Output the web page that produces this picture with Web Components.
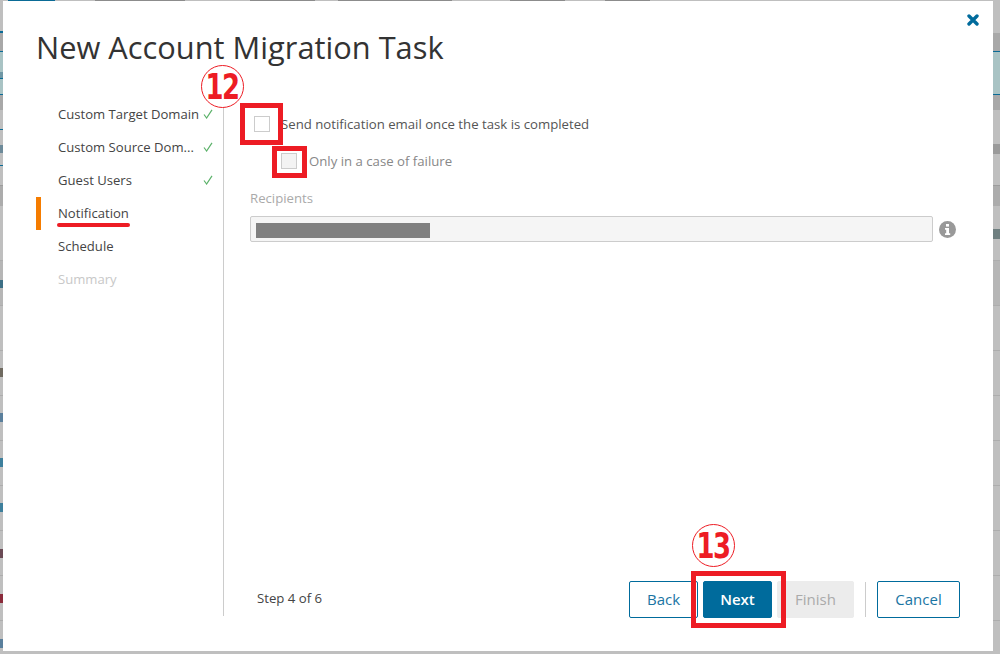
<!DOCTYPE html>
<html>
<head>
<meta charset="utf-8">
<title>New Account Migration Task</title>
<style>
    html, body { margin: 0; height: 100%; }
    body { font-family: "Open Sans", "Liberation Sans", sans-serif; overflow: hidden; }
</style>
</head>
<body>
<migration-page>
    <migration-modal heading="New Account Migration Task">
        <wizard-nav slot="nav"></wizard-nav>
        <notification-form></notification-form>
        <wizard-footer slot="footer"></wizard-footer>
    </migration-modal>
</migration-page>

<script>
class migrationPage extends HTMLElement {
    connectedCallback() {
        let shadowRoot = this.attachShadow({ mode: 'open' });

        // bits of the page behind the dialog: [x, y, w, h, colour]
        let bits = [
            [8, 0, 47, 1, '#0a6b96'], [95, 0, 90, 1, '#8c8c8c'], [250, 0, 65, 1, '#8c8c8c'],
            [338, 0, 114, 1, '#8c8c8c'], [510, 0, 55, 1, '#8c8c8c'], [605, 0, 45, 1, '#8c8c8c'],
            [0, 31, 3, 2, '#0a6b96'], [0, 78, 3, 1, '#0a6b96'],
            [0, 72, 3, 6, '#6f97a5'], [0, 129, 3, 1, '#0a6b96'], [0, 145, 3, 8, '#6d8a99'],
            [0, 165, 3, 1, '#0a6b96'], [0, 280, 3, 8, '#3d6f85'],
            [0, 368, 3, 9, '#6f6a60'], [0, 413, 3, 9, '#5a7f9c'], [0, 458, 3, 9, '#3d7f9c'],
            [0, 503, 3, 9, '#3d7f9c'], [0, 549, 3, 9, '#6a4a55'], [0, 594, 3, 9, '#8a2a3a'],
            [0, 639, 3, 9, '#5a7f9c'],
            [993, 144, 7, 10, '#9a9a9a'], [993, 229, 7, 10, '#6f7f80']
        ];
        let layers = bits.map(b => `linear-gradient(${b[4]}, ${b[4]}) ${b[0]}px ${b[1]}px / ${b[2]}px ${b[3]}px no-repeat`);

        shadowRoot.innerHTML = `
        <style>
            :host {
                display: block;
                height: 654px;
                box-sizing: border-box;
                padding: 1px 7px 3px 3px;
                background:
                    ${layers.join(',\n')},
                    linear-gradient(#0a6b96, #0a6b96) 0 51px / 100% 1px no-repeat,
                    linear-gradient(#0a6b96, #0a6b96) 0 94px / 100% 1px no-repeat,
                    linear-gradient(#a9c3c4, #a9c3c4) 0 51px / 100% 44px no-repeat,
                    linear-gradient(#a8a8a8, #a8a8a8) 0 33px / 100% 77px no-repeat,
                    linear-gradient(#9c9c9c, #9c9c9c) 0 185px / 100% 1px no-repeat,
                    linear-gradient(#acacac, #acacac) 0 186px / 100% 20px no-repeat,
                    linear-gradient(#bfbfbf, #bfbfbf) 0 0 / 100% 260px no-repeat,
                    linear-gradient(#b6b6b6, #b6b6b6) 0 261px / 100% 44px no-repeat,
                    linear-gradient(#adadad 1px, transparent 1px) 0 260px / 100% 45px repeat-y,
                    #bfbfbf;
            }
        </style>
        <slot></slot>
        `;
    }
}

class migrationModal extends HTMLElement {
    connectedCallback() {
        let shadowRoot = this.attachShadow({ mode: 'open' });
        shadowRoot.innerHTML = `
        <style>
            :host {
                display: flex;
                flex-direction: column;
                position: relative;
                height: 650px;
                box-sizing: border-box;
                padding: 0 33px 33px 33px;
                background: #fff;
            }
            h1 {
                margin: 0;
                padding-top: 26px;
                height: 97px;
                flex: none;
                box-sizing: border-box;
                font-size: 30.8px;
                line-height: 41px;
                font-weight: 400;
                color: #333;
            }
            .close {
                position: absolute;
                top: 13px;
                right: 14px;
                width: 12px;
                height: 12px;
            }
            .body { flex: 1; display: flex; min-height: 0; }
            .nav { width: 187px; flex: none; border-right: 1px solid #ccc; margin-bottom: 2px; }
            .main { flex: 1; display: flex; flex-direction: column; min-width: 0; }
            .content { flex: 1; }
            .mark { position: absolute; box-sizing: border-box; border: 5px solid #ed1c24; }
            .num {
                position: absolute;
                box-sizing: border-box;
                width: 43px;
                height: 43px;
                border: 1.5px solid #ed1c24;
                border-radius: 50%;
                background: #fff;
                display: flex;
                align-items: center;
                justify-content: center;
                color: #ed1c24;
            }
            .num span {
                font-family: "DejaVu Sans", sans-serif;
                font-weight: 700;
                font-size: 36px;
                line-height: 40px;
                transform: scaleX(.72);
                letter-spacing: -2px;
            }
        </style>
        <h1>${this.getAttribute('heading')}</h1>
        <svg class="close" viewBox="0 0 12 12"><path d="M2 2L10 10M10 2L2 10" stroke="#006b9c" stroke-width="3.4" stroke-linecap="round"/></svg>
        <div class="body">
            <div class="nav"><slot name="nav"></slot></div>
            <div class="main">
                <div class="content"><slot></slot></div>
                <slot name="footer"></slot>
            </div>
        </div>
        <div class="num" style="left:198px;top:64px"><span>12</span></div>
        <div class="num" style="left:689px;top:523px"><span>13</span></div>
        <div class="mark" style="left:237px;top:102px;width:43px;height:42px"></div>
        <div class="mark" style="left:269px;top:145px;width:35px;height:32px"></div>
        <div class="mark" style="left:688px;top:570px;width:95px;height:57px"></div>
        `;
    }
}

class wizardNav extends HTMLElement {
    connectedCallback() {
        let shadowRoot = this.attachShadow({ mode: 'open' });
        let steps = [
            { name: 'Custom Target Domain', done: true },
            { name: 'Custom Source Dom...', done: true },
            { name: 'Guest Users', done: true },
            { name: 'Notification', active: true },
            { name: 'Schedule' },
            { name: 'Summary', off: true }
        ];
        let check = `<svg viewBox="0 0 10 10" width="10" height="10"><path d="M1 5.5L3.6 9L9 .8" fill="none" stroke="#5cb26a" stroke-width="1.2"/></svg>`;
        shadowRoot.innerHTML = `
        <style>
            :host { display: block; font-size: 13.1px; color: #444; }
            .step {
                position: relative;
                display: flex;
                align-items: center;
                justify-content: space-between;
                height: 33px;
                box-sizing: border-box;
                padding: 0 10px 2px 22px;
            }
            .name { white-space: nowrap; }
            .off { color: #c8c8c8; }
            .active::before {
                content: '';
                position: absolute;
                left: 0;
                top: 0;
                width: 5px;
                height: 33px;
                background: #f57c00;
            }
            .active .name { position: relative; }
            .active .name::after {
                content: '';
                position: absolute;
                left: -1px;
                right: -1px;
                bottom: -5px;
                height: 4px;
                border-radius: 2px;
                background: #ed1c24;
            }
        </style>
        ${steps.map(s => `
            <div class="step ${s.active ? 'active' : ''} ${s.off ? 'off' : ''}">
                <span class="name">${s.name}</span>${s.done ? check : ''}
            </div>`).join('')}
        `;
    }
}

class notificationForm extends HTMLElement {
    connectedCallback() {
        let shadowRoot = this.attachShadow({ mode: 'open' });
        shadowRoot.innerHTML = `
        <style>
            :host { display: block; padding: 0 0 0 26px; font-size: 13.2px; color: #555; }
            .row { display: flex; align-items: center; }
            .box { box-sizing: border-box; width: 16px; height: 16px; border: 1px solid #ccc; background: #fff; flex: none; }
            .first { padding: 17px 0 0 4px; height: 18px; box-sizing: content-box; }
            .first .box { margin-right: 11px; }
            .second { padding: 20px 0 0 31px; height: 16px; color: #888; }
            .second .box { background: #f3f3f3; margin-right: 12px; }
            label { display: block; margin-top: 20px; line-height: 18px; color: #aaa; }
            .field { display: flex; align-items: center; gap: 6px; margin-top: 9px; width: 706px; }
            .input {
                flex: 1;
                box-sizing: border-box;
                height: 26px;
                padding: 6px 5px;
                background: #f5f5f5;
                border: 1px solid #ccc;
                border-radius: 2px;
            }
            .redacted { width: 174px; height: 15px; background: #808080; }
        </style>
        <div class="row first"><span class="box"></span><span>Send notification email once the task is completed</span></div>
        <div class="row second"><span class="box"></span><span>Only in a case of failure</span></div>
        <label>Recipients</label>
        <div class="field">
            <div class="input"><div class="redacted"></div></div>
            <svg width="17" height="17" viewBox="0 0 17 17">
                <circle cx="8.5" cy="8.5" r="8.5" fill="#999"/>
                <rect x="7" y="3" width="3" height="2.6" fill="#fff"/>
                <path d="M6 7h4v5.2h1.2V14H6v-1.8h1.2V8.8H6z" fill="#fff"/>
            </svg>
        </div>
        `;
    }
}

class wizardFooter extends HTMLElement {
    connectedCallback() {
        let shadowRoot = this.attachShadow({ mode: 'open' });
        shadowRoot.innerHTML = `
        <style>
            :host { display: flex; align-items: center; height: 37px; flex: none; padding-left: 33px; font-size: 13.2px; color: #444; }
            .step { flex: 1; margin-bottom: 4px; }
            .btn {
                box-sizing: border-box;
                height: 37px;
                padding-bottom: 2px;
                display: flex;
                align-items: center;
                justify-content: center;
                font-size: 15px;
                border-radius: 2px;
                border: 1px solid #006b9c;
                color: #1a75a3;
                background: #fff;
            }
            .back { width: 69px; }
            .next { width: 69px; margin-left: 5px; background: #006b9c; color: #fff; font-weight: 600; }
            .finish { width: 77px; margin-left: 5px; background: #ececec; border-color: #ececec; color: #aaa; }
            .sep { width: 1px; height: 35px; background: #ccc; margin: 0 11px; }
            .cancel { width: 83px; }
        </style>
        <span class="step">Step 4 of 6</span>
        <div class="btn back">Back</div>
        <div class="btn next">Next</div>
        <div class="btn finish">Finish</div>
        <div class="sep"></div>
        <div class="btn cancel">Cancel</div>
        `;
    }
}

window.customElements.define('migration-page', migrationPage);
window.customElements.define('migration-modal', migrationModal);
window.customElements.define('wizard-nav', wizardNav);
window.customElements.define('notification-form', notificationForm);
window.customElements.define('wizard-footer', wizardFooter);
</script>
</body>
</html>
